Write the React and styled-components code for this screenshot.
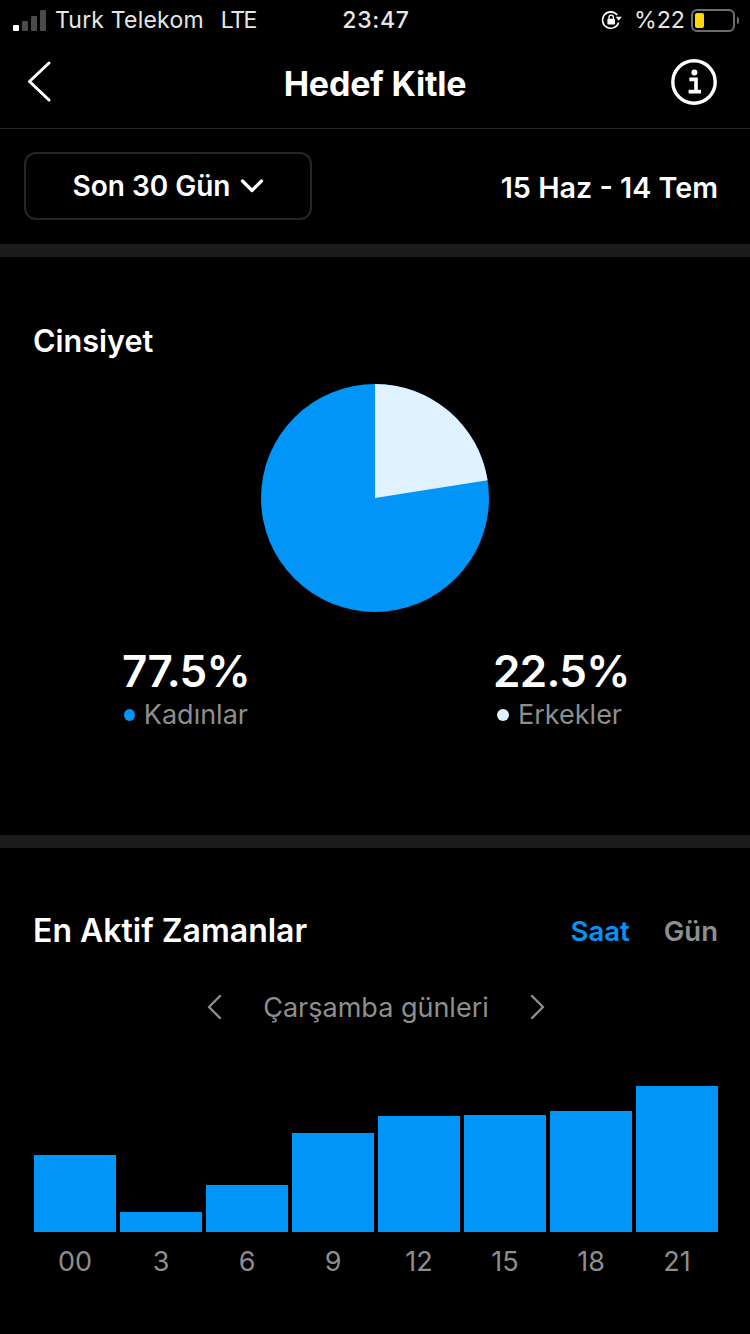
import styled, { createGlobalStyle } from "styled-components";

const BLUE = "#0095f6";
const LIGHT = "#e0f1ff";

const bars = [
	{ label: "00", height: 77 },
	{ label: "3", height: 20 },
	{ label: "6", height: 47 },
	{ label: "9", height: 99 },
	{ label: "12", height: 116 },
	{ label: "15", height: 117 },
	{ label: "18", height: 121 },
	{ label: "21", height: 146 },
];

const App = () => {
	return (
		<Page>
			<GlobalStyle />
			<StatusBar>
				<StatusLeft>
					<Signal>
						<SignalBar $h={6} $on />
						<SignalBar $h={10} />
						<SignalBar $h={15} />
						<SignalBar $h={21} />
					</Signal>
					<Carrier>Turk Telekom</Carrier>
					<Carrier $tight>LTE</Carrier>
				</StatusLeft>
				<Clock>23:47</Clock>
				<StatusRight>
					<svg width="22" height="20" viewBox="0 0 22 20" fill="none">
						<path
							d="M17.6 12.4A8.2 8.2 0 1 1 16.2 5"
							stroke="#fff"
							strokeWidth="1.6"
						/>
						<path d="M14.6 6.8h6.2L17.7 10.8z" fill="#fff" />
						<rect x="6.4" y="8.8" width="7.6" height="5.8" rx="1" fill="#fff" />
						<path
							d="M8 9V7.4a2.2 2.2 0 0 1 4.4 0V9"
							stroke="#fff"
							strokeWidth="1.3"
						/>
					</svg>
					<Percent>%22</Percent>
					<Battery>
						<BatteryFill />
					</Battery>
					<BatteryTip />
				</StatusRight>
			</StatusBar>

			<NavBar>
				<BackIcon width="26" height="42" viewBox="0 0 26 42" fill="none">
					<path
						d="M23 2 L3.5 20.5 L23 39"
						stroke="#fff"
						strokeWidth="3"
						strokeLinecap="round"
						strokeLinejoin="round"
					/>
				</BackIcon>
				<NavTitle>Hedef Kitle</NavTitle>
				<InfoIcon width="46" height="46" viewBox="0 0 46 46" fill="none">
					<circle cx="23" cy="23" r="21.2" stroke="#fff" strokeWidth="3.4" />
					<circle cx="23.4" cy="13.6" r="3" fill="#fff" />
					<path
						d="M18.4 20.4h6.6v12M17.6 32.6h12.4"
						stroke="#fff"
						strokeWidth="3.6"
					/>
				</InfoIcon>
			</NavBar>

			<FilterRow>
				<RangeButton>
					Son 30 Gün
					<svg width="24" height="16" viewBox="0 0 24 16" fill="none">
						<path
							d="M2.5 3 L12 12.5 L21.5 3"
							stroke="#fff"
							strokeWidth="3.2"
							strokeLinecap="round"
							strokeLinejoin="round"
						/>
					</svg>
				</RangeButton>
				<DateRange>15 Haz - 14 Tem</DateRange>
			</FilterRow>

			<GenderSection>
				<SectionTitle>Cinsiyet</SectionTitle>
				<PieWrap>
					<svg width="228" height="228" viewBox="0 0 228 228">
						<circle cx="114" cy="114" r="114" fill={BLUE} />
						<path d="M114 114 V0 A114 114 0 0 1 226.6 96.2 Z" fill={LIGHT} />
					</svg>
				</PieWrap>
				<Legend>
					<LegendItem $width={126}>
						<LegendValue>77.5%</LegendValue>
						<LegendLabel $indent={2}>
							<Dot $color={BLUE} />
							Kadınlar
						</LegendLabel>
					</LegendItem>
					<LegendItem $width={134}>
						<LegendValue>22.5%</LegendValue>
						<LegendLabel $indent={4}>
							<Dot $color={LIGHT} />
							Erkekler
						</LegendLabel>
					</LegendItem>
				</Legend>
			</GenderSection>

			<ActiveSection>
				<ActiveHeader>
					<HeaderTitle>En Aktif Zamanlar</HeaderTitle>
					<Tabs>
						<Tab $active>Saat</Tab>
						<Tab>Gün</Tab>
					</Tabs>
				</ActiveHeader>
				<DayPicker>
					<svg width="16" height="26" viewBox="0 0 16 26" fill="none">
						<path
							d="M14 2 L3 13 L14 24"
							stroke="#8e8e8e"
							strokeWidth="2.4"
							strokeLinecap="round"
							strokeLinejoin="round"
						/>
					</svg>
					<DayLabel>Çarşamba günleri</DayLabel>
					<svg width="16" height="26" viewBox="0 0 16 26" fill="none">
						<path
							d="M2 2 L13 13 L2 24"
							stroke="#8e8e8e"
							strokeWidth="2.4"
							strokeLinecap="round"
							strokeLinejoin="round"
						/>
					</svg>
				</DayPicker>
				<Chart>
					{bars.map((bar) => (
						<Column key={bar.label}>
							<Bar $h={bar.height} />
							<BarLabel>{bar.label}</BarLabel>
						</Column>
					))}
				</Chart>
			</ActiveSection>
		</Page>
	);
};

export default App;

const GlobalStyle = createGlobalStyle`
	html, body {
		margin: 0;
		padding: 0;
		background: #000;
	}
`;

const Page = styled.div`
	width: 750px;
	height: 1334px;
	overflow: hidden;
	background: #000;
	color: #fff;
	font-family: Inter, "Liberation Sans", sans-serif;
`;

const StatusBar = styled.div`
	height: 40px;
	box-sizing: border-box;
	padding: 0 11px 0 13px;
	display: grid;
	grid-template-columns: minmax(0, 1fr) auto minmax(0, 1fr);
	align-items: center;
	color: #e6e6e6;
`;

const StatusLeft = styled.div`
	display: flex;
	align-items: center;
	gap: 18px;
`;

const Signal = styled.div`
	display: flex;
	align-items: flex-end;
	gap: 3px;
	height: 21px;
	margin-right: -9px;
`;

const SignalBar = styled.span`
	width: 6px;
	height: ${({ $h }) => $h}px;
	border-radius: 1px;
	background: ${({ $on }) => ($on ? "#fff" : "#4a4a4a")};
`;

const Carrier = styled.span`
	font-size: 23px;
	letter-spacing: ${({ $tight }) => ($tight ? "-1.4px" : "0.2px")};
	margin-left: ${({ $tight }) => ($tight ? "-1px" : "0")};
`;

const Clock = styled.span`
	font-size: 23px;
	font-weight: 500;
	letter-spacing: 0.7px;
`;

const StatusRight = styled.div`
	display: flex;
	align-items: center;
	justify-content: flex-end;
	gap: 2px;
`;

const Percent = styled.span`
	font-size: 23.2px;
	margin: 0 4px 0 9px;
`;

const Battery = styled.div`
	width: 44px;
	height: 23px;
	box-sizing: border-box;
	padding: 2px;
	border: 2px solid #6e6e6e;
	border-radius: 6px;
`;

const BatteryFill = styled.div`
	width: 9px;
	height: 100%;
	border-radius: 2px;
	background: #ffd60a;
`;

const BatteryTip = styled.div`
	width: 2px;
	height: 7px;
	border-radius: 0 2px 2px 0;
	background: #6e6e6e;
`;

const NavBar = styled.div`
	height: 89px;
	box-sizing: border-box;
	padding: 0 33px 4px;
	display: grid;
	grid-template-columns: minmax(0, 1fr) auto minmax(0, 1fr);
	align-items: center;
	border-bottom: 1px solid #262626;
`;

const BackIcon = styled.svg`
	margin-left: -7px;
`;

const NavTitle = styled.h1`
	margin: 0;
	padding-top: 2px;
	font-size: 34px;
	font-weight: 700;
	letter-spacing: -0.2px;
`;

const InfoIcon = styled.svg`
	justify-self: end;
`;

const FilterRow = styled.div`
	height: 115px;
	box-sizing: border-box;
	padding: 0 32px 2px 24px;
	display: flex;
	align-items: center;
	justify-content: space-between;
`;

const RangeButton = styled.div`
	width: 288px;
	height: 68px;
	box-sizing: border-box;
	display: flex;
	align-items: center;
	justify-content: center;
	gap: 9px;
	border: 2px solid #262626;
	border-radius: 12px;
	font-size: 28px;
	font-weight: 600;
`;

const DateRange = styled.span`
	padding-top: 4px;
	font-size: 28.7px;
	font-weight: 600;
`;

const GenderSection = styled.section`
	height: 604px;
	box-sizing: border-box;
	padding: 65px 33px 0;
	border-top: 13px solid #1c1c1c;
	border-bottom: 13px solid #1c1c1c;
`;

const SectionTitle = styled.h2`
	margin: 0;
	font-size: 30.6px;
	font-weight: 600;
	line-height: 38px;
`;

const PieWrap = styled.div`
	display: flex;
	justify-content: center;
	margin-top: 24px;
	height: 228px;
`;

const Legend = styled.div`
	display: flex;
	padding: 32px 0 0 89px;
	gap: 245px;
`;

const LegendItem = styled.div`
	width: ${({ $width }) => $width}px;
`;

const LegendValue = styled.div`
	font-size: 44px;
	font-weight: 600;
	line-height: 54px;
	letter-spacing: -0.7px;
`;

const LegendLabel = styled.div`
	display: flex;
	align-items: center;
	gap: 9px;
	padding-left: ${({ $indent }) => $indent}px;
	font-size: 27px;
	line-height: 34px;
	color: #8e8e8e;
`;

const Dot = styled.span`
	width: 12px;
	height: 12px;
	border-radius: 50%;
	background: ${({ $color }) => $color};
`;

const ActiveSection = styled.section`
	padding: 62px 32px 0 34px;
`;

const ActiveHeader = styled.div`
	display: flex;
	align-items: center;
	justify-content: space-between;
	height: 40px;
`;

const HeaderTitle = styled.h2`
	margin: 0 0 0 -1px;
	font-size: 32px;
	font-weight: 600;
`;

const Tabs = styled.div`
	display: flex;
	gap: 34px;
	padding-top: 2px;
`;

const Tab = styled.span`
	font-size: 27.5px;
	font-weight: 600;
	color: ${({ $active }) => ($active ? BLUE : "#8e8e8e")};
`;

const DayPicker = styled.div`
	display: flex;
	align-items: center;
	justify-content: center;
	gap: 41px;
	margin-top: 37px;
	height: 40px;
	color: #8e8e8e;
`;

const DayLabel = styled.span`
	font-size: 27px;
`;

const Chart = styled.div`
	display: flex;
	align-items: flex-end;
	gap: 4px;
	margin-top: 59px;
`;

const Column = styled.div`
	width: 82px;
	display: flex;
	flex-direction: column;
	align-items: center;
`;

const Bar = styled.div`
	width: 100%;
	height: ${({ $h }) => $h}px;
	background: ${BLUE};
`;

const BarLabel = styled.span`
	margin-top: 13px;
	font-size: 27px;
	line-height: 34px;
	color: #8e8e8e;
`;
